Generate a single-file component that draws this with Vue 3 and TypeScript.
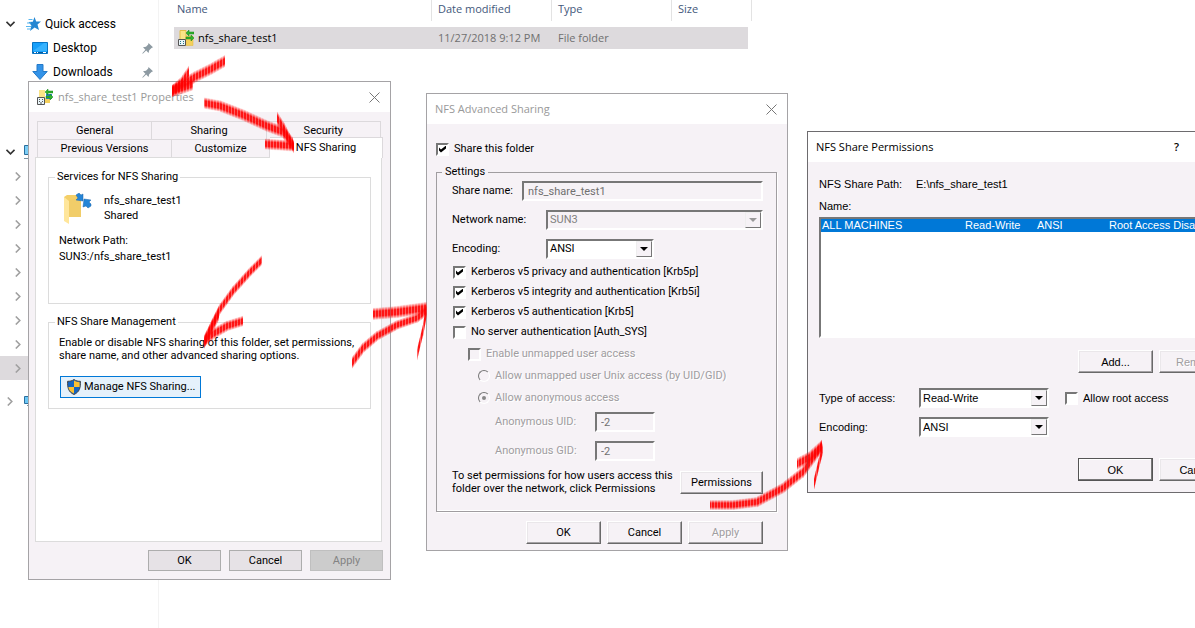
<script setup lang="ts">
import { ref } from 'vue'

type Point = [number, number]
interface Stroke { points: Point[]; thickness: number }
interface Column { x: number; y: number; height: number; opacity: number }

const treeRows = [176, 200, 224, 248, 272, 296, 320, 344, 368]
const shareName = ref('nfs_share_test1')
const uid = ref('-2')
const gid = ref('-2')

const security = ref([
  { label: 'Kerberos v5 privacy and authentication [Krb5p]', on: true },
  { label: 'Kerberos v5 integrity and authentication [Krb5i]', on: true },
  { label: 'Kerberos v5 authentication [Krb5]', on: true },
  { label: 'No server authentication [Auth_SYS]', on: false },
])

const strokes: Stroke[] = [
  { points: [[225, 61], [211, 69], [195, 77], [180, 86], [172, 91]], thickness: 11 },
  { points: [[189, 72], [182, 82], [172, 91]], thickness: 10 },
  { points: [[193, 84], [182, 88], [172, 91]], thickness: 12 },
  { points: [[204, 103], [220, 106], [243, 115], [267, 126], [283, 132], [293, 144]], thickness: 11 },
  { points: [[277, 118], [284, 129], [290, 141], [294, 147]], thickness: 10 },
  { points: [[265, 144], [280, 145], [294, 146]], thickness: 11 },
  { points: [[262, 260], [250, 272], [233, 291], [220, 309], [212, 325], [204, 343]], thickness: 8 },
  { points: [[219, 313], [212, 327], [204, 342]], thickness: 10 },
  { points: [[243, 321], [227, 326], [213, 334], [204, 341]], thickness: 10 },
  { points: [[352, 363], [363, 348], [377, 336], [397, 325], [417, 318], [426, 311]], thickness: 9 },
  { points: [[373, 314], [397, 312], [426, 308]], thickness: 12 },
  { points: [[427, 308], [423, 330], [417, 355]], thickness: 4 },
  { points: [[710, 505], [733, 505], [757, 502], [783, 488], [803, 472], [822, 446]], thickness: 10 },
  { points: [[797, 464], [810, 457], [822, 446]], thickness: 11 },
  { points: [[823, 448], [819, 463], [814, 484]], thickness: 4 },
]

// Each stroke is built from one-pixel vertical columns, as a flat brush leaves them.
function columnsOf(stroke: Stroke): Column[] {
  const result: Column[] = []
  for (let i = 1; i < stroke.points.length; i++) {
    let a = stroke.points[i - 1]
    let b = stroke.points[i]
    if (a[0] > b[0]) [a, b] = [b, a]
    const slope = (b[1] - a[1]) / Math.max(1, b[0] - a[0])
    for (let x = a[0]; x < b[0]; x++) {
      const y = a[1] + slope * (x - a[0] + 0.5)
      const height = stroke.thickness + Math.abs(slope) * 2.5
      result.push({ x, y: y - height / 2, height, opacity: x % 3 === 0 ? 0.62 : 0.92 })
    }
  }
  return result
}
const columns = strokes.flatMap(columnsOf)
</script>

<template>
  <div class="desktop">
    <main class="explorer">
      <nav class="tree" aria-label="Folders">
        <div class="node">
          <button class="twist" aria-label="Collapse"><svg width="9" height="6" viewBox="0 0 9 6"><path d="M.5 .8 4.5 4.8 8.5 .8" fill="none" stroke="#333" stroke-width="1.6" /></svg></button>
          <svg class="star" width="15" height="14" viewBox="0 0 15 14"><path d="M8.500 0l1.700 4.500H15l-3.500 3 1.500 5.500L8.600 10.500 4 14l1.400-5.600L2.500 5l4.300-.3z" fill="#2486d2" /><path d="M2.500 2.500h4M1 6h4M0 9.500h5M1 12h4" stroke="#58b6ee" /></svg>
          <a href="#">Quick access</a>
        </div>
        <div class="node child">
          <svg width="16" height="12" viewBox="0 0 16 12"><path d="M.5 .5h15v11H.5z" fill="#18a0fa" stroke="#0874c4" /><path d="M1 9 12 1h3v8z" fill="#37b3ff" /><path d="M1 10.5h14" stroke="#075a9a" /><path d="M2 10.5h2M5 10.5h1M11 10.5h3" stroke="#fff" /></svg>
          <a href="#">Desktop</a>
          <svg class="pin" width="11" height="11" viewBox="0 0 11 11"><path d="M6.5 0 11 4.3 9.5 5 7.2 7.2 6.5 10 4.2 7.6.8 10.8.3 10.2 3.4 6.8 1 4.3 4 3.8 6.2 1.5z" fill="#8d9aa2" /></svg>
        </div>
        <div class="node child">
          <svg width="16" height="16" viewBox="0 0 16 16"><path d="M5 .5h6v7h4.2L8 15.5.8 7.5H5z" fill="#3393e8" stroke="#247ac9" /></svg>
          <a href="#">Downloads</a>
          <svg class="pin" width="11" height="11" viewBox="0 0 11 11"><path d="M6.5 0 11 4.3 9.5 5 7.2 7.2 6.5 10 4.2 7.6.8 10.8.3 10.2 3.4 6.8 1 4.3 4 3.8 6.2 1.5z" fill="#8d9aa2" /></svg>
        </div>
        <div class="node computer">
          <button class="twist" aria-label="Collapse"><svg width="9" height="6" viewBox="0 0 9 6"><path d="M.5 .8 4.5 4.8 8.5 .8" fill="none" stroke="#333" stroke-width="1.6" /></svg></button>
          <svg class="monitor" width="16" height="15" viewBox="0 0 16 15"><path d="M.5 .5h15v9H.5z" fill="#7bcdf5" stroke="#2a6f9e" /><path d="M0 13.5h16" stroke="#7892a2" /></svg>
        </div>
        <div v-for="row in treeRows" :key="row" class="node drive" :class="{ current: row === 368 }">
          <button class="twist" aria-label="Expand"><svg width="6" height="9" viewBox="0 0 6 9"><path d="M.8 .5 4.8 4.5 .8 8.5" fill="none" stroke="#a0a0a0" stroke-width="1.6" /></svg></button>
        </div>
        <div class="node network">
          <button class="twist" aria-label="Expand"><svg width="6" height="9" viewBox="0 0 6 9"><path d="M.8 .5 4.8 4.5 .8 8.5" fill="none" stroke="#a0a0a0" stroke-width="1.6" /></svg></button>
          <svg class="monitor" width="16" height="10" viewBox="0 0 16 10"><path d="M.5 .5h15v7H.5z" fill="#6cc7f5" stroke="#2a6f9e" /><path d="M3 9.5h10" stroke="#7892a2" /></svg>
        </div>
      </nav>
      <table class="files">
        <thead><tr><th class="c-name">Name</th><th class="c-date">Date modified</th><th class="c-date">Type</th><th class="c-size">Size</th></tr></thead>
        <tbody>
          <tr>
            <td><span class="file">
              <svg width="16" height="16" viewBox="0 0 16 16"><path d="M2 .5h6v10H2z" fill="#fbe487" stroke="#e3bd48" /><path d="M8 6h7v9.500H8z" fill="#f4d05c" stroke="#e3bd48" stroke-width=".6" /><path d="M8 3 11 0v2h5v2h-5v2zM16 8l-3-3v2H8v2h5v2z" fill="#31b32c" stroke="#16801a" stroke-width=".5" /><path d="M.5 9.500h7v6h-7z" fill="#e9f5f9" stroke="#555" /><path d="M2 11.500h1M5 11.500h1M2 13.500h1M5 13.500h1" stroke="#278" /></svg>
              nfs_share_test1</span></td>
            <td class="dim">11/27/2018 9:12 PM</td><td class="dim">File folder</td><td></td>
          </tr>
        </tbody>
      </table>
    </main>

    <section class="dialog properties" role="dialog" aria-labelledby="t1">
      <header class="titlebar inactive">
        <svg width="16" height="16" viewBox="0 0 16 16"><path d="M2 1h6v10H2z" fill="#fbe487" /><path d="M8 9h5v5H8z" fill="#f4d05c" /><path d="M9 5h6v5H9z" fill="#297fd4" /><path d="M8 3 11 0v2h5v2h-5v2zM16 8l-3-3v2H9v2h4v2z" fill="#31b32c" stroke="#16801a" stroke-width=".5" /><path d="M.5 8.500h7v7h-7z" fill="#e9f5f9" stroke="#555" /><path d="M2 10.500h1M5 10.500h1M2 12.500h1M5 12.500h1M3 14h2" stroke="#555" /></svg>
        <h2 id="t1">nfs_share_test1 Properties</h2>
        <button class="close" aria-label="Close"><svg width="11" height="11" viewBox="0 0 11 11"><path d="M.5 .5l10 10M10.500 .5l-10 10" stroke="#777" /></svg></button>
      </header>
      <div class="tabs" role="tablist">
        <div class="tabrow">
          <button role="tab" class="tab third">General</button><button role="tab" class="tab third">Sharing</button><button role="tab" class="tab third">Security</button>
        </div>
        <div class="tabrow">
          <button role="tab" class="tab previous">Previous Versions</button><button role="tab" class="tab customize">Customize</button><button role="tab" class="tab selected" aria-selected="true">NFS Sharing</button>
        </div>
      </div>
      <div class="panel">
        <fieldset class="group services">
          <legend>Services for NFS Sharing</legend>
          <div class="share">
            <svg width="30" height="32" viewBox="0 0 30 32"><path d="M0 4 3 2h14v19l-12 3H0z" fill="#f4cf68" /><path d="M5 7 17 4v20H5z" fill="#f1cd69" /><path d="M0 4l5 4v23l-5-3z" fill="#ffe69b" /><path d="M12 2l3-2 2 2 2-1v7l-7-1 2-2zM27 13l-3 2-2-2-3 1 1-8 7 1-2 2 2 2z" fill="#2585d6" stroke="#1c67ac" stroke-width=".5" /></svg>
            <p>nfs_share_test1<br>Shared</p>
          </div>
          <p class="path">Network Path:<br>SUN3:/nfs_share_test1</p>
        </fieldset>
        <fieldset class="group management">
          <legend>NFS Share Management</legend>
          <p>Enable or disable NFS sharing of this folder, set permissions,<br>share name, and other advanced sharing options.</p>
          <button class="manage">
            <svg width="14" height="16" viewBox="0 0 14 16"><path d="M7 .5C5 2 3 2.300.600 2.300.400 9 1.500 13 7 15.500 12.500 13 13.600 9 13.400 2.300 11 2.300 9 2 7 .5z" fill="#1464c0" stroke="#444" /><path d="M7 1.500c2 1.200 3.500 1.600 5.600 1.700V8H7zM1.400 8H7v6.400C3.400 12.800 1.700 11 1.400 8z" fill="#fdc02f" /></svg>
            Manage NFS Sharing...
          </button>
        </fieldset>
      </div>
      <footer class="flat-actions"><button class="flat">OK</button><button class="flat">Cancel</button><button class="flat" disabled>Apply</button></footer>
    </section>

    <section class="dialog advanced" role="dialog" aria-labelledby="t2">
      <header class="titlebar inactive">
        <h2 id="t2">NFS Advanced Sharing</h2>
        <button class="close" aria-label="Close"><svg width="11" height="11" viewBox="0 0 11 11"><path d="M.5 .5l10 10M10.500 .5l-10 10" stroke="#777" /></svg></button>
      </header>
      <label class="check share-toggle"><input type="checkbox" checked>Share this folder</label>
      <fieldset class="settings">
        <legend>Settings</legend>
        <div class="fields">
          <div class="field"><label class="l-share" for="share">Share name:</label><input id="share" v-model="shareName" class="sunken grow" disabled></div>
          <div class="field"><label class="l-net" for="net">Network name:</label><span class="combo grow off"><select id="net" disabled><option>SUN3</option></select><i class="drop"></i></span></div>
          <div class="field"><label class="l-net" for="enc">Encoding:</label><span class="combo encoding"><select id="enc"><option>ANSI</option></select><i class="drop"></i></span></div>
        </div>
        <div class="checks">
          <label v-for="item in security" :key="item.label" class="check"><input v-model="item.on" type="checkbox">{{ item.label }}</label>
        </div>
        <div class="unmapped">
          <label class="check off"><input type="checkbox" disabled>Enable unmapped user access</label>
          <label class="check off inner"><input type="radio" name="mode" disabled>Allow unmapped user Unix access (by UID/GID)</label>
          <label class="check off inner"><input type="radio" name="mode" checked disabled>Allow anonymous access</label>
        </div>
        <div class="ids">
          <div class="field"><label class="etched" for="uid">Anonymous UID:</label><input id="uid" v-model="uid" class="sunken id" disabled></div>
          <div class="field"><label class="etched" for="gid">Anonymous GID:</label><input id="gid" v-model="gid" class="sunken id" disabled></div>
        </div>
        <div class="hint">
          <p>To set permissions for how users access this<br>folder over the network, click Permissions</p>
          <button class="raised wide">Permissions</button>
        </div>
      </fieldset>
      <footer class="actions"><button class="raised">OK</button><button class="raised">Cancel</button><button class="raised" disabled>Apply</button></footer>
    </section>

    <section class="dialog permissions" role="dialog" aria-labelledby="t3">
      <header class="titlebar">
        <h2 id="t3">NFS Share Permissions</h2>
        <button class="help" aria-label="Help">?</button>
      </header>
      <div class="perm-body">
        <p class="perm-path"><span>NFS Share Path:</span><span>E:\nfs_share_test1</span></p>
        <p class="perm-name">Name:</p>
        <div class="list">
          <table><tbody><tr><td class="m1">ALL MACHINES</td><td class="m2">Read-Write</td><td class="m2">ANSI</td><td>Root Access Disabled</td></tr></tbody></table>
        </div>
        <div class="pair"><button class="raised">Add...</button><button class="raised" disabled>Remove</button></div>
        <div class="access">
          <label for="type">Type of access:</label><span class="combo"><select id="type"><option>Read-Write</option></select><i class="drop"></i></span><label class="check root"><input type="checkbox">Allow root access</label>
          <label for="enc2">Encoding:</label><span class="combo"><select id="enc2"><option>ANSI</option></select><i class="drop"></i></span>
        </div>
        <div class="pair last"><button class="raised default">OK</button><button class="raised">Cancel</button></div>
      </div>
    </section>

    <svg class="arrows" width="100%" height="100%" aria-hidden="true">
      <defs><linearGradient id="brush" x1="0" y1="0" x2="0" y2="1"><stop offset="0" stop-color="#f00" stop-opacity=".1" /><stop offset=".3" stop-color="#f00" /><stop offset=".7" stop-color="#f00" /><stop offset="1" stop-color="#f00" stop-opacity=".1" /></linearGradient></defs>
      <rect v-for="(c, i) in columns" :key="i" :x="c.x" :y="c.y" width="1" :height="c.height" :opacity="c.opacity" fill="url(#brush)" />
    </svg>
  </div>
</template>

<style>
body { margin: 0; background: #fff; }
</style>

<style scoped>
.desktop { position: relative; height: 100vh; overflow: hidden; background: #fff; color: #000; font: 11px/16px "Open Sans", "Noto Sans", sans-serif; }
.desktop *, .desktop *::before { box-sizing: border-box; }
button, input, select { font: inherit; color: inherit; margin: 0; padding: 0; border: 0; border-radius: 0; background: none; outline: none; }
p, h2 { margin: 0; font: inherit; }
a { color: #000; text-decoration: none; }
svg { flex: none; display: block; }

.explorer { display: grid; grid-template-columns: 159px 1fr; min-height: 100%; align-items: start; }
.tree { align-self: stretch; border-right: 1px solid #f3f3f3; padding-top: 12px; font-family: "Noto Sans", sans-serif; font-size: 12px; }
.tree { font-family: Roboto, sans-serif; }
.node { display: flex; align-items: center; height: 24px; padding-left: 6px; }
.node .star { margin: 0 4px 0 11px; }
.node.child { padding: 0 5px 0 32px; gap: 5px; }
.pin { margin-left: auto; }
.node.computer { margin-top: 56px; }
.monitor { margin-left: 9px; }
.node.drive { padding-left: 15px; }
.node.current { background: #dddadd; }
.node.network { margin-top: 9px; padding-left: 7px; }
.node.network .monitor { margin-left: 11px; }
.twist { display: flex; }

.files { border-spacing: 0; margin-left: 15px; table-layout: fixed; width: 578px; text-align: left; }
.files th { height: 21px; padding: 0 0 4px 6px; border-right: 1px solid #e3e3e3; font-weight: 400; color: #43587b; }
.files th.c-name { width: 258px; padding-left: 3px; }
.files th.c-date { width: 120px; }
.files tbody::before { content: ""; display: block; height: 6px; }
.files td { height: 22px; padding: 0 0 0 6px; background: #dddadd; white-space: nowrap; }
.files td:first-child { padding-left: 4px; }
.files td:last-child { border-right: 4px solid transparent; background-clip: padding-box; }
.files .dim { color: #707070; }
.file { display: flex; gap: 4px; align-items: center; }

.dialog { position: absolute; border: 1px solid #a5a3a6; background: #f6f2f6; font: 11px/14px "Liberation Sans", Arial, sans-serif; }
.titlebar { display: flex; align-items: center; height: 30px; padding: 0 10px 0 8px; background: #fff; font: 11px/16px "Open Sans", "Noto Sans", sans-serif; }
.titlebar.inactive { color: #999; }
.titlebar svg + h2 { margin-left: 5px; }
.close { margin-left: auto; }

.properties { left: 28px; top: 81px; width: 363px; font-family: Roboto, "Liberation Sans", sans-serif; }
.tabs { margin: 9px 9px 0 8px; }
.tabrow { display: flex; height: 18px; }
.tab { border: 1px solid #dcd9dc; border-width: 1px 1px 0 0; }
.tab:first-child { border-left-width: 1px; }
.third { flex: 1; }
.previous { flex: 0 0 135px; }
.customize { flex: 0 0 98px; }
.tab.selected { flex: 1; margin: -2px -2px -1px 0; border-left: 0; background: #fff; z-index: 1; }
.panel { margin: 0 8px 8px 6px; padding: 12px 10px 132px 12px; border: 1px solid #dcdcdc; background: #fff; display: grid; gap: 11px; }
.group { margin: 0; border: 1px solid #dcdcdc; padding: 0 10px; min-width: 0; }
.group legend { padding: 0 2px; margin-left: -4px; line-height: 14px; }
.services { height: 134px; }
.share { display: flex; gap: 10px; padding: 9px 0 0 5px; line-height: 15px; }
.path { margin-top: 8px; line-height: 16px; }
.management p { margin-top: 7px; line-height: 13px; white-space: nowrap; }
.management { padding-bottom: 10px; }
.manage { display: flex; align-items: center; gap: 3px; height: 22px; width: 141px; margin: 14px 0 0 1px; padding-left: 6px; border: 1px solid #0078d7; background: #e5f1fb; white-space: nowrap; }
.flat-actions { display: flex; justify-content: flex-end; gap: 8px; padding: 0 7px 8px; }
.flat { width: 73px; height: 21px; border: 1px solid #adadad; background: #e6e2e6; }
.flat:disabled { background: #ccc; border-color: #bfbfbf; color: #838383; }

.advanced { left: 426px; top: 93px; width: 362px; font-family: Roboto, "Noto Sans", sans-serif; }
.check { display: flex; align-items: center; gap: 5px; height: 20px; white-space: nowrap; }
.check input { appearance: none; flex: none; width: 13px; height: 13px; border: 2px solid; border-color: #777 #fff #fff #777; background: #fff; }
.check input[type="checkbox"]:checked::before { content: ""; display: block; width: 7px; height: 7px; margin: 1px; background: #000; clip-path: polygon(0 28%, 28% 57%, 100% 0, 100% 42%, 28% 100%, 0 72%); }
.check.off { color: #a09da0; text-shadow: 1px 1px #fff; height: 22px; }
.check.off input { background: #f6f2f6; }
.check input[type="radio"] { width: 12px; height: 12px; border-radius: 50%; border-width: 1px; }
.check input[type="radio"]:checked::before { content: ""; display: block; width: 4px; height: 4px; margin: 3px; border-radius: 50%; background: #888; }
.share-toggle { margin: 15px 0 0 9px; }
.settings { margin: 6px 10px 0 9px; padding: 0 13px 16px 15px; border: 1px solid #a09da0; box-shadow: inset 0 -1px #fff, 1px 1px #fff; min-width: 0; }
.settings legend { padding: 0 3px; margin-left: -10px; line-height: 14px; }
.fields, .ids { display: grid; gap: 9px; padding-top: 2px; }
.field { display: flex; align-items: center; height: 20px; white-space: nowrap; }
.l-share { width: 70px; }
.l-net { width: 94px; }
.grow { flex: 1; min-width: 0; }
.sunken { height: 20px; padding: 0 4px; border: 2px solid; border-color: #777 #fff #fff #777; color: #707070; }
.combo { position: relative; display: flex; height: 20px; border: 2px solid; border-color: #777 #fff #fff #777; background: #fff; }
.combo.off { background: transparent; color: #808080; }
.combo select { appearance: none; flex: 1; min-width: 0; padding-left: 2px; opacity: 1; }
.drop { position: absolute; top: 0; right: 0; width: 16px; height: 16px; border: 1px solid; border-color: #eee #777 #777 #eee; background: #f6f2f6; pointer-events: none; }
.drop::before { content: ""; position: absolute; left: 3px; top: 5px; border: 4px solid transparent; border-width: 4px 4px 0; border-top-color: #000; }
.off .drop::before { border-top-color: #999; }
.encoding { width: 108px; }
.checks { padding: 3px 0 1px 1px; }
.unmapped { padding-left: 16px; }
.inner { padding-left: 10px; }
.ids { padding: 3px 0 0 43px; }
.ids label { width: 100px; }
.etched { color: #a09da0; text-shadow: 1px 1px #fff; }
.id { width: 60px; }
.hint { display: flex; justify-content: space-between; padding-top: 8px; line-height: 13px; white-space: nowrap; }
.raised { flex: none; width: 75px; height: 23px; border: 1px solid; border-color: #fff #696969 #696969 #fff; box-shadow: inset -1px -1px #a5a2a5, inset 1px 1px #eae7ea; }
.raised:disabled { color: #a09da0; text-shadow: 1px 1px #fff; }
.raised.default { border-color: #555; box-shadow: inset -1px -1px #777, inset 1px 1px #fff; }
.wide { width: 83px; margin-top: 2px; }
.actions { display: flex; justify-content: flex-end; gap: 6px; padding: 9px 24px 6px; }

.permissions { left: 807px; top: 131px; width: 440px; border-color: #6d6b6e; }
.help { margin-left: auto; margin-right: 57px; font-weight: 600; }
.perm-body { padding: 15px 12px 11px 11px; }
.perm-path { display: grid; grid-template-columns: 97px 1fr; }
.perm-name { margin-top: 8px; }
.list { height: 121px; margin: 4px 0 12px; border: 2px solid; border-color: #777 #fff #fff #777; background: #fff; }
.list table { width: 100%; border-spacing: 0; background: #0078d7; color: #fff; line-height: 13px; white-space: nowrap; }
.list td { padding: 0 0 0 1px; }
.list .m1 { width: 143px; }
.list .m2 { width: 72px; }
.pair { display: flex; gap: 6px; padding-left: 259px; }
.access { display: grid; grid-template-columns: 100px 130px 1fr; gap: 9px 0; padding: 15px 0 21px; align-items: center; }
.root { margin-left: 16px; }
.arrows { position: absolute; inset: 0; z-index: 2; pointer-events: none; }
</style>
